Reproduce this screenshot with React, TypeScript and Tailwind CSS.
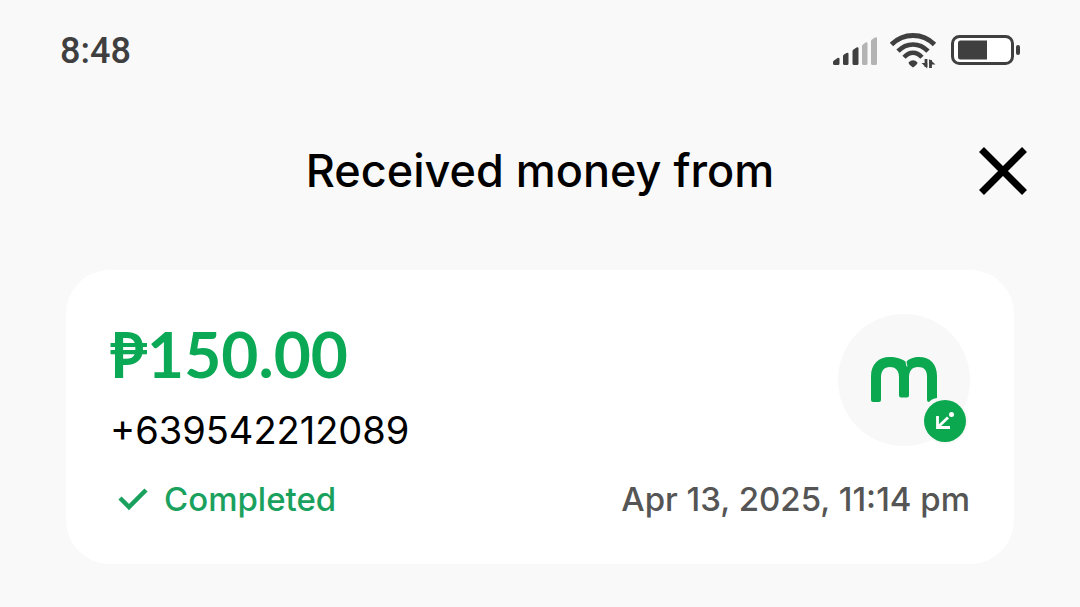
function SignalIcon() {
  return (
    <svg width="46" height="30" viewBox="0 0 46 30" aria-hidden="true">
      <g fill="#3f3f3f">
        <path d="M1 26Q1 25 2 24.500L5.500 22Q7.500 21 7.500 23V27.500Q7.500 29 6 29H2.500Q1 29 1 27.500Z" />
        <path d="M11 20Q11 19 12 18.500L14.500 17Q16.500 16 16.500 18V27.500Q16.500 29 15 29H12.500Q11 29 11 27.500Z" />
        <path d="M20.500 15Q20.500 14 21.500 13.500L24.500 11.500Q26.500 10.500 26.500 12.500V27.500Q26.500 29 25 29H22Q20.500 29 20.500 27.500Z" />
      </g>
      <g fill="#b3b3b3">
        <path d="M30 10Q30 9 31 8.500L33.500 6.500Q35.500 5.500 35.500 7.500V27.500Q35.500 29 34 29H31.500Q30 29 30 27.500Z" />
        <path d="M39 5Q39 4 40 3.500L43 1.500Q45 0.500 45 2.500V27.500Q45 29 43.500 29H40.500Q39 29 39 27.500Z" />
      </g>
    </svg>
  );
}

function WifiIcon() {
  return (
    <svg width="48" height="36" viewBox="0 0 48 36" aria-hidden="true">
      <g fill="none" stroke="#3f3f3f">
        <path d="M1.500 11.500C13.500 -0.500 32.500 -0.500 44.500 11.500" strokeWidth="4.800" />
        <path d="M8 18.200C16.500 9.200 29.500 9.200 38 18.200" strokeWidth="4.600" />
        <path d="M14 24.300C19.500 18.300 26.500 18.300 32 24.300" strokeWidth="4.400" />
      </g>
      <path d="M18.500 29.500Q23 25 27.500 29.500Q27.500 31.500 23 34.500Q18.500 31.500 18.500 29.500Z" fill="#3f3f3f" />
      <path d="M36 26V34M40.500 27V35" stroke="#3f3f3f" strokeWidth="2.800" fill="none" />
      <path d="M31.500 30H37.200V35.500ZM39.300 26L45.500 31.500H39.300Z" fill="#3f3f3f" />
    </svg>
  );
}

function BatteryIcon() {
  return (
    <svg width="70" height="32" viewBox="0 0 70 32" aria-hidden="true">
      <rect x="2.500" y="1.500" width="60" height="27" rx="7" fill="#fff" stroke="#3f3f3f" strokeWidth="3" />
      <path d="M10.500 5.500H37V24.500H10.500Q8 24.500 8 22V8Q8 5.500 10.500 5.500Z" fill="#3f3f3f" />
      <rect x="66" y="10" width="4" height="10" rx="2" fill="#3f3f3f" />
    </svg>
  );
}

function MerchantLogo() {
  return (
    <svg width="132" height="132" viewBox="0 0 132 132" aria-hidden="true">
      <circle cx="66" cy="66" r="66" fill="#f8f8f8" />
      <path
        d="M33 88V62C33 50 41 43 51.500 43C58 43 64 44.500 68 48C71 44.500 76 43 81 43C92 43 99 50 99 62V84Q94 84.500 91 88Q89 88 89 86V63C89 56 86 53 80 53C74 53 71 57 71 63V81.500Q71 83.500 69 83.500H63Q61 83.500 61 81.500V63C61 56 57 53 52 53C46 53 43 57 43 63V86Q43 88 41 88H35Q33 88 33 86Z"
        fill="#0ba850"
      />
      <path d="M70 44Q66.500 47.500 69 52.500" fill="none" stroke="#f8f8f8" strokeWidth="1" />
      <circle cx="107" cy="107" r="23" fill="#f8f8f8" />
      <circle cx="107" cy="107" r="21" fill="#0ba850" />
      <path d="M99.500 102V113.500H112M100 113L110 103.500" fill="none" stroke="#fff" strokeWidth="2.800" />
      <circle cx="113.500" cy="100.500" r="2.500" fill="#fff" />
    </svg>
  );
}

export default function App() {
  return (
    <div className="min-h-screen bg-[#f9f9f9] font-['Inter',sans-serif]">
      <div className="flex h-[102px] items-center justify-between px-[60px] text-[#3f3f3f]">
        <time className="font-['Roboto',sans-serif] text-[36px] leading-[40px] font-medium">8:48</time>
        <div className="flex items-center gap-3">
          <SignalIcon />
          <WifiIcon />
          <BatteryIcon />
        </div>
      </div>
      <header className="grid grid-cols-[48px_1fr_48px] items-center px-[53px] pt-[41px]">
        <h1 className="col-start-2 text-center text-[45px] leading-[56px] font-medium text-black">
          Received money from
        </h1>
        <button type="button" aria-label="Close" className="flex size-12 items-center justify-center">
          <svg width="48" height="48" viewBox="0 0 48 48" aria-hidden="true">
            <path d="M2.500 2.500L45.500 45.500M45.500 2.500L2.500 45.500" stroke="#000" strokeWidth="7" />
          </svg>
        </button>
      </header>
      <main className="px-[66px] pt-[71px] pb-10">
        <section className="rounded-[44px] bg-white px-11 pt-11 pb-[45px]">
          <div className="flex items-start justify-between">
            <div>
              <p className="font-['Lato',sans-serif] text-[64px] leading-[80px] font-bold text-[#0ba855]">₱150.00</p>
              <p className="mt-3 text-[38px] leading-[48px] text-black">+639542212089</p>
            </div>
            <MerchantLogo />
          </div>
          <div className="mt-[25px] flex items-center justify-between text-[33px] leading-[40px] font-medium">
            <p className="flex items-center gap-4 pl-2 text-[#1ba15e]">
              <svg width="30" height="24" viewBox="0 0 30 24" aria-hidden="true">
                <path d="M2 11L11 20L28 3" fill="none" stroke="#1ba15e" strokeWidth="4.500" />
              </svg>
              Completed
            </p>
            <time className="text-[#555]">Apr 13, 2025, 11:14 pm</time>
          </div>
        </section>
      </main>
    </div>
  );
}
